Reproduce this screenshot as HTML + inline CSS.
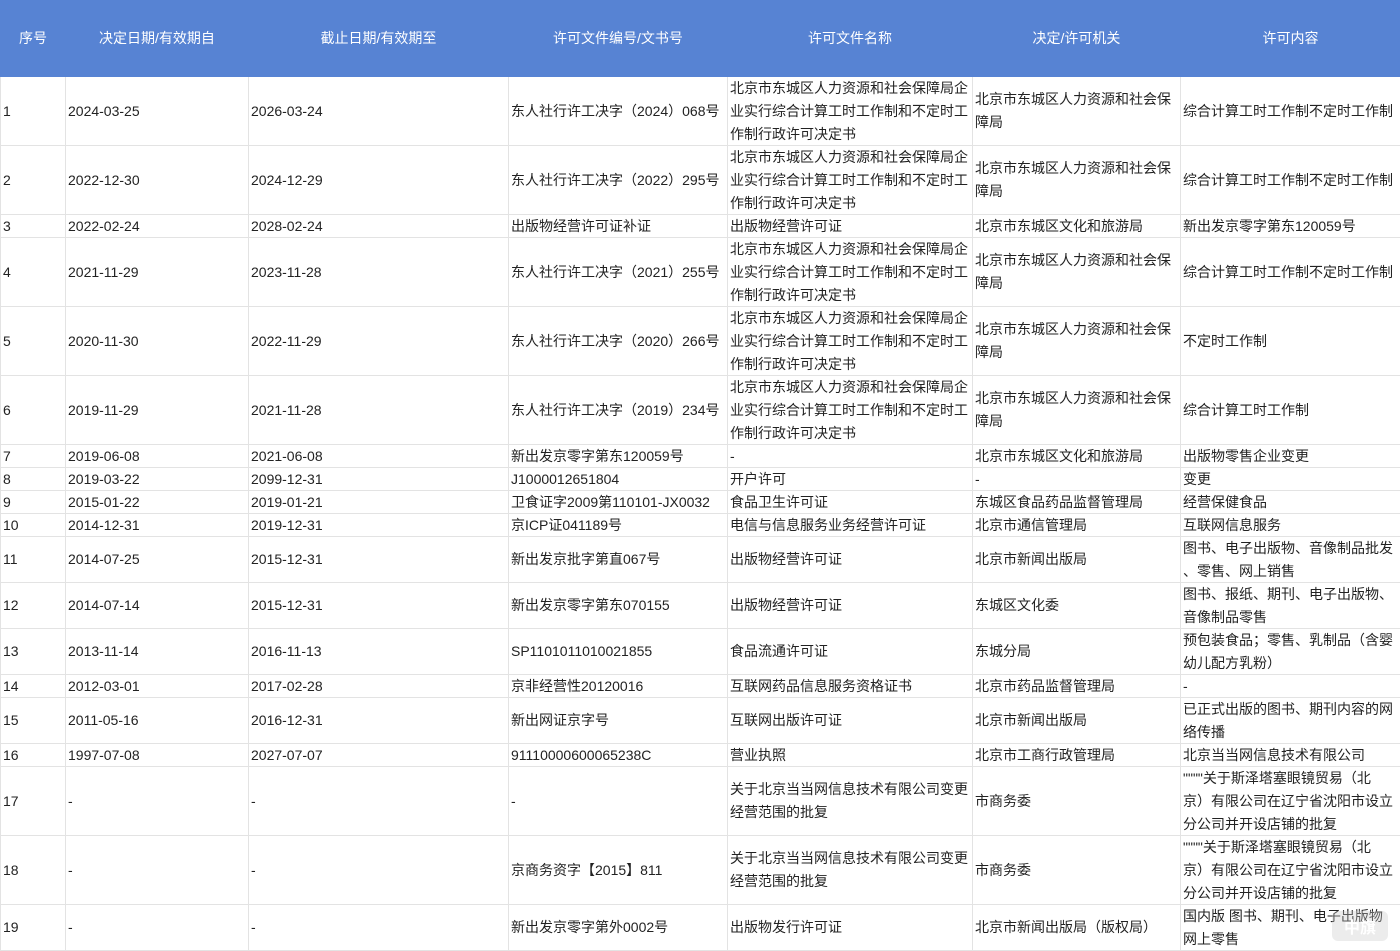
<!DOCTYPE html>
<html><head><meta charset="utf-8"><style>
html,body{margin:0;padding:0;background:#fff;width:1400px;height:951px;overflow:hidden}
table{border-collapse:collapse;table-layout:fixed;width:1400px;font-family:"Liberation Sans","Noto Sans CJK SC",sans-serif;font-size:14px;color:#222}
td,th{border:1px solid #e3e3e3;padding:0;vertical-align:middle;white-space:nowrap;overflow:hidden}
td>div,th>div{display:flex;align-items:center;overflow:hidden;line-height:23px;padding-left:2px}
th{background:#5783d3;color:#fff;font-weight:normal;border-color:#5783d3}
th>div{height:75px;justify-content:center;padding:0}
.h3 div{height:68px}.h2 div{height:45px}.h1 div{height:22px}
.wm{position:absolute;left:1332px;top:911px;width:56px;height:30px;background:rgba(200,200,200,.35);border-radius:6px;color:#fff;font:bold 16px "Noto Sans CJK SC",sans-serif;text-align:center;line-height:30px}
</style></head><body>
<table>
<colgroup><col style="width:65px"><col style="width:183px"><col style="width:260px"><col style="width:219px"><col style="width:245px"><col style="width:208px"><col style="width:220px"></colgroup>
<tr><th><div>序号</div></th><th><div>决定日期/有效期自</div></th><th><div>截止日期/有效期至</div></th><th><div>许可文件编号/文书号</div></th><th><div>许可文件名称</div></th><th><div>决定/许可机关</div></th><th><div>许可内容</div></th></tr>
<tr class="h3"><td><div>1</div></td><td><div>2024-03-25</div></td><td><div>2026-03-24</div></td><td><div>东人社行许工决字（2024）068号</div></td><td><div>北京市东城区人力资源和社会保障局企<br>业实行综合计算工时工作制和不定时工<br>作制行政许可决定书</div></td><td><div>北京市东城区人力资源和社会保<br>障局</div></td><td><div>综合计算工时工作制不定时工作制</div></td></tr>
<tr class="h3"><td><div>2</div></td><td><div>2022-12-30</div></td><td><div>2024-12-29</div></td><td><div>东人社行许工决字（2022）295号</div></td><td><div>北京市东城区人力资源和社会保障局企<br>业实行综合计算工时工作制和不定时工<br>作制行政许可决定书</div></td><td><div>北京市东城区人力资源和社会保<br>障局</div></td><td><div>综合计算工时工作制不定时工作制</div></td></tr>
<tr class="h1"><td><div>3</div></td><td><div>2022-02-24</div></td><td><div>2028-02-24</div></td><td><div>出版物经营许可证补证</div></td><td><div>出版物经营许可证</div></td><td><div>北京市东城区文化和旅游局</div></td><td><div>新出发京零字第东120059号</div></td></tr>
<tr class="h3"><td><div>4</div></td><td><div>2021-11-29</div></td><td><div>2023-11-28</div></td><td><div>东人社行许工决字（2021）255号</div></td><td><div>北京市东城区人力资源和社会保障局企<br>业实行综合计算工时工作制和不定时工<br>作制行政许可决定书</div></td><td><div>北京市东城区人力资源和社会保<br>障局</div></td><td><div>综合计算工时工作制不定时工作制</div></td></tr>
<tr class="h3"><td><div>5</div></td><td><div>2020-11-30</div></td><td><div>2022-11-29</div></td><td><div>东人社行许工决字（2020）266号</div></td><td><div>北京市东城区人力资源和社会保障局企<br>业实行综合计算工时工作制和不定时工<br>作制行政许可决定书</div></td><td><div>北京市东城区人力资源和社会保<br>障局</div></td><td><div>不定时工作制</div></td></tr>
<tr class="h3"><td><div>6</div></td><td><div>2019-11-29</div></td><td><div>2021-11-28</div></td><td><div>东人社行许工决字（2019）234号</div></td><td><div>北京市东城区人力资源和社会保障局企<br>业实行综合计算工时工作制和不定时工<br>作制行政许可决定书</div></td><td><div>北京市东城区人力资源和社会保<br>障局</div></td><td><div>综合计算工时工作制</div></td></tr>
<tr class="h1"><td><div>7</div></td><td><div>2019-06-08</div></td><td><div>2021-06-08</div></td><td><div>新出发京零字第东120059号</div></td><td><div>-</div></td><td><div>北京市东城区文化和旅游局</div></td><td><div>出版物零售企业变更</div></td></tr>
<tr class="h1"><td><div>8</div></td><td><div>2019-03-22</div></td><td><div>2099-12-31</div></td><td><div>J1000012651804</div></td><td><div>开户许可</div></td><td><div>-</div></td><td><div>变更</div></td></tr>
<tr class="h1"><td><div>9</div></td><td><div>2015-01-22</div></td><td><div>2019-01-21</div></td><td><div>卫食证字2009第110101-JX0032</div></td><td><div>食品卫生许可证</div></td><td><div>东城区食品药品监督管理局</div></td><td><div>经营保健食品</div></td></tr>
<tr class="h1"><td><div>10</div></td><td><div>2014-12-31</div></td><td><div>2019-12-31</div></td><td><div>京ICP证041189号</div></td><td><div>电信与信息服务业务经营许可证</div></td><td><div>北京市通信管理局</div></td><td><div>互联网信息服务</div></td></tr>
<tr class="h2"><td><div>11</div></td><td><div>2014-07-25</div></td><td><div>2015-12-31</div></td><td><div>新出发京批字第直067号</div></td><td><div>出版物经营许可证</div></td><td><div>北京市新闻出版局</div></td><td><div>图书、电子出版物、音像制品批发<br>、零售、网上销售</div></td></tr>
<tr class="h2"><td><div>12</div></td><td><div>2014-07-14</div></td><td><div>2015-12-31</div></td><td><div>新出发京零字第东070155</div></td><td><div>出版物经营许可证</div></td><td><div>东城区文化委</div></td><td><div>图书、报纸、期刊、电子出版物、<br>音像制品零售</div></td></tr>
<tr class="h2"><td><div>13</div></td><td><div>2013-11-14</div></td><td><div>2016-11-13</div></td><td><div>SP1101011010021855</div></td><td><div>食品流通许可证</div></td><td><div>东城分局</div></td><td><div>预包装食品；零售、乳制品（含婴<br>幼儿配方乳粉）</div></td></tr>
<tr class="h1"><td><div>14</div></td><td><div>2012-03-01</div></td><td><div>2017-02-28</div></td><td><div>京非经营性20120016</div></td><td><div>互联网药品信息服务资格证书</div></td><td><div>北京市药品监督管理局</div></td><td><div>-</div></td></tr>
<tr class="h2"><td><div>15</div></td><td><div>2011-05-16</div></td><td><div>2016-12-31</div></td><td><div>新出网证京字号</div></td><td><div>互联网出版许可证</div></td><td><div>北京市新闻出版局</div></td><td><div>已正式出版的图书、期刊内容的网<br>络传播</div></td></tr>
<tr class="h1"><td><div>16</div></td><td><div>1997-07-08</div></td><td><div>2027-07-07</div></td><td><div>91110000600065238C</div></td><td><div>营业执照</div></td><td><div>北京市工商行政管理局</div></td><td><div>北京当当网信息技术有限公司</div></td></tr>
<tr class="h3"><td><div>17</div></td><td><div>-</div></td><td><div>-</div></td><td><div>-</div></td><td><div>关于北京当当网信息技术有限公司变更<br>经营范围的批复</div></td><td><div>市商务委</div></td><td><div>""""关于斯泽塔塞眼镜贸易（北<br>京）有限公司在辽宁省沈阳市设立<br>分公司并开设店铺的批复</div></td></tr>
<tr class="h3"><td><div>18</div></td><td><div>-</div></td><td><div>-</div></td><td><div>京商务资字【2015】811</div></td><td><div>关于北京当当网信息技术有限公司变更<br>经营范围的批复</div></td><td><div>市商务委</div></td><td><div>""""关于斯泽塔塞眼镜贸易（北<br>京）有限公司在辽宁省沈阳市设立<br>分公司并开设店铺的批复</div></td></tr>
<tr class="h2"><td><div>19</div></td><td><div>-</div></td><td><div>-</div></td><td><div>新出发京零字第外0002号</div></td><td><div>出版物发行许可证</div></td><td><div>北京市新闻出版局（版权局）</div></td><td><div>国内版 图书、期刊、电子出版物<br>网上零售</div></td></tr>
</table>
<div class="wm">中旗</div>
</body></html>
